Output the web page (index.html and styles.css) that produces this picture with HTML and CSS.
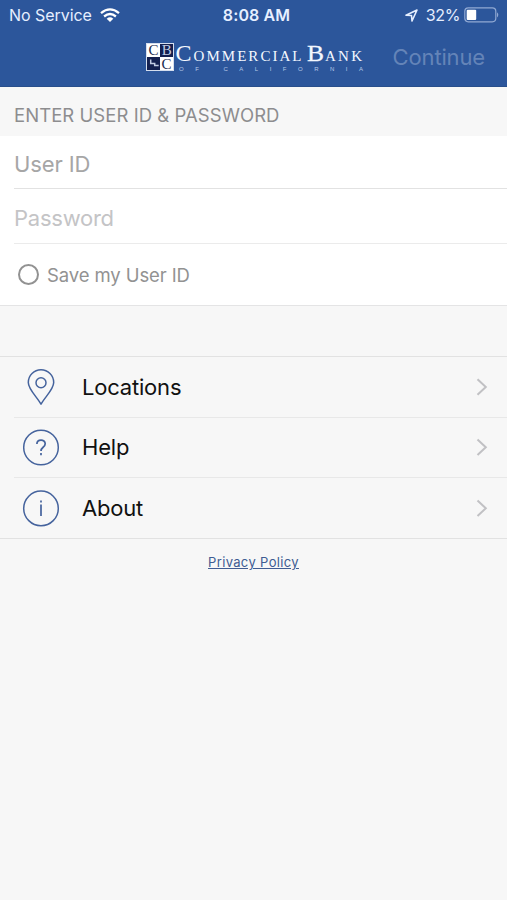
FILE: index.html
```html
<!DOCTYPE html>
<html lang="en">
<head>
<meta charset="utf-8">
<title>Commercial Bank of California</title>
<link rel="stylesheet" href="styles.css">
</head>
<body>
<header class="header">
  <div class="status">
    <div class="status-left">
      <span class="carrier">No Service</span>
      <svg class="wifi" width="20" height="15" viewBox="0 0 20 15">
        <g fill="none" stroke="#fff" stroke-width="2.3"><path d="M1 5.1Q10-2.4 19 5.1M4.1 8.5Q10 3.6 15.9 8.5"/></g>
        <path fill="#fff" d="M6.7 10.7Q10 7.9 13.3 10.7L10 14Z"/>
      </svg>
    </div>
    <span class="time">8:08 AM</span>
    <div class="status-right">
      <svg class="arrow" width="13" height="13" viewBox="0 0 13 13"><path fill="none" stroke="#e6efff" stroke-width="1.6" stroke-linejoin="round" d="M1 6.2 12 1 7 12 6.5 6.5Z"/></svg>
      <span class="percent">32%</span>
      <svg class="battery" width="35" height="16" viewBox="0 0 35 16">
        <rect x=".8" y=".8" width="31" height="14" rx="3.5" fill="none" stroke="#91a9d3" stroke-width="1.2"/>
        <rect x="2.7" y="2.7" width="9.5" height="10.3" rx="1" fill="#fff"/>
        <path fill="#91a9d3" d="M33 5.2q2.6 2.6 0 5.2Z"/>
      </svg>
    </div>
  </div>
  <nav class="nav">
    <svg class="logo" width="220" height="30" viewBox="0 0 220 30">
      <rect x=".5" y=".5" width="27" height="27" fill="#14204f" stroke="#d5deee" stroke-width="1"/>
      <path fill="#fff" d="M1 1h13v13H1zM14 14h13v13H14z"/>
      <g class="serif" text-anchor="middle" font-size="15">
        <text x="7.4" y="12.4" fill="#222c50">C</text>
        <text x="20.7" y="12.4" fill="#c2cbe2">B</text>
        <text x="20.6" y="25.7" fill="#222c50">C</text>
      </g>
      <path fill="none" stroke="#c2cbe2" stroke-width="1.5" d="M4.7 16.5v4h4v2h4"/>
      <g class="serif" fill="#f4f8ff">
        <text x="29.5" y="18" font-size="24" textLength="16" lengthAdjust="spacingAndGlyphs">C</text>
        <text x="47.5" y="18" font-size="15" textLength="108">OMMERCIAL</text>
        <text x="161" y="18" font-size="24" textLength="17" lengthAdjust="spacingAndGlyphs" stroke="#f4f8ff" stroke-width=".3">B</text>
        <text x="179" y="18" font-size="15" textLength="37">ANK</text>
      </g>
      <text class="tagline" x="33" y="27.6" textLength="184" xml:space="preserve">OF CALIFORNIA</text>
    </svg>
    <span class="continue">Continue</span>
  </nav>
</header>
<main>
  <h1 class="section-title"><span>ENTER USER ID &amp; PASSWORD</span></h1>
  <section class="form">
    <div class="field user"><span>User ID</span></div>
    <div class="field password"><span>Password</span></div>
    <div class="save"><i class="radio"></i><span>Save my User ID</span></div>
  </section>
  <section class="menu">
    <div class="row">
      <svg class="icon" width="38" height="38" viewBox="0 0 38 38" fill="none" stroke="#45639d" stroke-width="1.5"><path stroke-linejoin="round" d="M19 36.2C15.5 29.5 6.3 21.3 6.3 14.4a12.7 12.7 0 0 1 25.4 0C31.7 21.3 22.5 29.5 19 36.2Z"/><circle cx="19" cy="14.8" r="5"/></svg>
      <span class="label">Locations</span>
      <svg class="chevron" width="12" height="18" viewBox="0 0 12 18"><path d="M1.5 1.2 9.8 9 1.5 16.8"/></svg>
    </div>
    <div class="row">
      <svg class="icon" width="38" height="38" viewBox="0 0 38 38" fill="none" stroke="#45639d" stroke-width="1.5"><circle cx="19" cy="19.5" r="17.3"/><path stroke-width="1.7" d="M14.9 16.1c0-5.4 8.3-5.2 8.3-.4 0 3.7-4.2 3.4-4.2 7.2M19 25.1v2.2"/></svg>
      <span class="label">Help</span>
      <svg class="chevron" width="12" height="18" viewBox="0 0 12 18"><path d="M1.5 1.5 9.8 9.3 1.5 17.1"/></svg>
    </div>
    <div class="row">
      <svg class="icon" width="38" height="38" viewBox="0 0 38 38" fill="none" stroke="#45639d" stroke-width="1.5"><circle cx="19" cy="19.4" r="17.3"/><path stroke-width="1.7" d="M19 15.6v11.3M19 11.4v2.2"/></svg>
      <span class="label">About</span>
      <svg class="chevron" width="12" height="18" viewBox="0 0 12 18"><path d="M1.5 1.5 9.8 9.3 1.5 17.1"/></svg>
    </div>
  </section>
  <footer class="footer"><a class="policy">Privacy Policy</a></footer>
</main>
</body>
</html>
```
FILE: styles.css
```css
* { box-sizing: border-box; }
body {
  margin: 0;
  min-height: 900px;
  background: #f7f7f7;
  font-family: Inter, "Liberation Sans", sans-serif;
  overflow: hidden;
}
svg { display: block; flex: none; overflow: visible; }
span { white-space: nowrap; }
.header { height: 87px; background: #2c569b; border-bottom: 1px solid #294f8b; }
.status {
  height: 30px;
  padding: 0 8px 0 9px;
  display: grid;
  grid-template-columns: 1fr auto 1fr;
  align-items: center;
  color: #e6efff;
  font-size: 16px;
}
.status-left, .status-right { display: flex; align-items: center; }
.status-right { justify-content: flex-end; }
.carrier { letter-spacing: -.05px; }
.wifi { margin-left: 8px; }
.time { font-weight: 600; letter-spacing: .1px; padding-left: 5px; }
.arrow { margin-right: 8px; }
.percent { letter-spacing: -.4px; margin-right: 4px; }
.nav { height: 56px; display: flex; padding: 13px 22px 0 146px; }
.serif { font-family: "Liberation Serif", serif; }
.tagline { font: 6px "Liberation Sans", sans-serif; fill: #b6c8e8; }
.continue { margin-left: auto; line-height: 29px; font-size: 22px; color: #6484b8; letter-spacing: -.15px; }
.section-title {
  margin: 0;
  height: 49px;
  padding: 8px 14px 0;
  font-size: 18.5px;
  font-weight: 400;
  line-height: 41px;
  letter-spacing: .05px;
  color: #8d8d8f;
}
.form { height: 170px; background: #fff; border-bottom: 1px solid #e4e4e5; }
.field { margin-left: 14px; font-size: 22px; letter-spacing: -.25px; }
.user { height: 53px; line-height: 56px; color: #a6a6a6; letter-spacing: -.1px; border-bottom: 1px solid #e2e2e2; }
.password { height: 55px; line-height: 58px; color: #c4c4c6; border-bottom: 1px solid #ebebeb; }
.save { height: 61px; padding-left: 18px; display: flex; align-items: center; font-size: 18.5px; letter-spacing: -.1px; color: #929292; }
.radio { width: 21px; height: 21px; margin-right: 8px; border: 2px solid #929292; border-radius: 50%; }
.menu { margin-top: 50px; height: 183px; border-top: 1px solid #e2e2e2; border-bottom: 1px solid #e2e2e2; }
.row { height: 60.5px; margin-left: 14px; padding: 0 19px 0 8px; display: flex; align-items: center; border-bottom: 1px solid #e8e8e8; }
.row:last-child { border-bottom: 0; }
.icon { margin-right: 22px; }
.label { font-size: 22px; letter-spacing: -.2px; color: #111; }
.chevron { margin-left: auto; fill: none; stroke: #c1c1c4; stroke-width: 2; }
.footer { padding-top: 13px; text-align: center; line-height: 19px; }
.policy { font-size: 13px; color: #405c93; text-decoration: underline; letter-spacing: .35px; }
```
